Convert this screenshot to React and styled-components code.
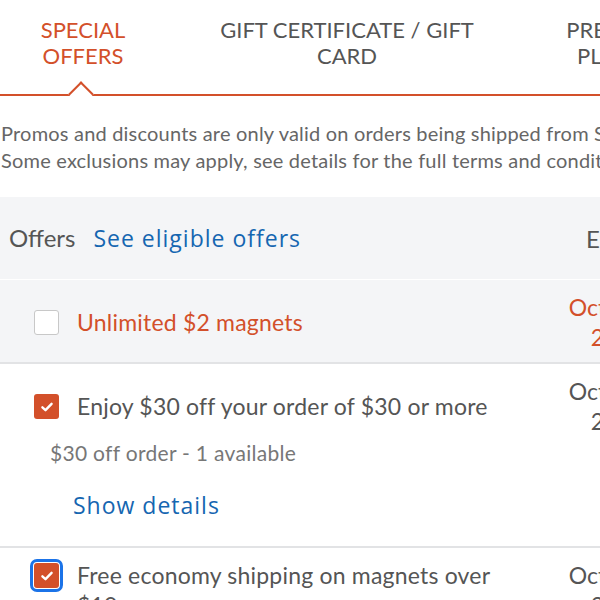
import React from "react";
import styled, { createGlobalStyle } from "styled-components";

const GlobalStyle = createGlobalStyle`
  html, body {
    margin: 0;
    padding: 0;
    background: #ffffff;
    overflow: hidden;
  }
  body {
    font-family: "Lato", "Noto Sans", sans-serif;
  }
`;

const orange = "#d3502a";
const blue = "#1566b1";

const tabs = [
  { label: "SPECIAL OFFERS", width: 166, active: true },
  { label: "GIFT CERTIFICATE / GIFT CARD", width: 362 },
  { label: "PREPAID PLANS", width: 166 },
];

const offers = [
  {
    id: 1,
    title: "Unlimited $2 magnets",
    checked: false,
    highlight: true,
    date: "Oct 31, 2023",
  },
  {
    id: 2,
    title: "Enjoy $30 off your order of $30 or more",
    checked: true,
    sub: "$30 off order - 1 available",
    details: true,
    date: "Oct 31, 2023",
  },
  {
    id: 3,
    title: "Free economy shipping on magnets over $10",
    checked: true,
    focused: true,
    date: "Oct 31, 2023",
  },
];

function App() {
  return (
    <Page>
      <GlobalStyle />
      <TabBar>
        {tabs.map((tab) => (
          <Tab key={tab.label} $width={tab.width} $active={tab.active}>
            {tab.label}
            {tab.active && <Notch />}
          </Tab>
        ))}
      </TabBar>

      <Notice>
        Promos and discounts are only valid on orders being shipped from Sticker
        Mule.
        <br />
        Some exclusions may apply, see details for the full terms and conditions.
      </Notice>

      <Table>
        <HeaderRow>
          <HeaderCell>
            Offers <LinkText>See eligible offers</LinkText>
          </HeaderCell>
          <DateHead>Expires</DateHead>
        </HeaderRow>

        {offers.map((offer) => (
          <OfferRow key={offer.id} $shaded={offer.highlight}>
            <OfferHead>
              <OfferLine>
                <Check $checked={offer.checked} $focused={offer.focused}>
                  {offer.checked && (
                    <svg width="16" height="16" viewBox="0 0 16 16">
                      <path
                        d="M3.4 8.3 L6.5 11.2 L12.6 4.8"
                        fill="none"
                        stroke="#fff"
                        strokeWidth="2.4"
                        strokeLinecap="round"
                        strokeLinejoin="round"
                      />
                    </svg>
                  )}
                </Check>
                <OfferTitle $highlight={offer.highlight}>{offer.title}</OfferTitle>
              </OfferLine>
              <DateCell $highlight={offer.highlight}>{offer.date}</DateCell>
            </OfferHead>
            {offer.sub && <OfferSub>{offer.sub}</OfferSub>}
            {offer.details && <DetailsLink>Show details</DetailsLink>}
          </OfferRow>
        ))}
      </Table>
    </Page>
  );
}

export default App;

const Page = styled.div`
  width: 760px;
  height: 600px;
  overflow: hidden;
`;

const TabBar = styled.div`
  display: flex;
  height: 96px;
  border-bottom: 2px solid ${orange};
  box-sizing: border-box;
  padding-top: 17px;
`;

const Tab = styled.div`
  position: relative;
  flex: 0 0 ${(p) => p.$width}px;
  box-sizing: border-box;
  padding: 0 ${(p) => (p.$width > 200 ? 46 : 22)}px;
  text-align: center;
  font-size: 22px;
  line-height: 26px;
  color: ${(p) => (p.$active ? orange : "#555555")};
`;

const Notch = styled.span`
  position: absolute;
  left: 50%;
  bottom: -9px;
  width: 16px;
  height: 16px;
  margin-left: -11px;
  background: #fff;
  border-left: 2px solid ${orange};
  border-top: 2px solid ${orange};
  transform: rotate(45deg);
`;

const Notice = styled.p`
  margin: 24px 0 0;
  padding: 0 0 0 1px;
  font-size: 20px;
  line-height: 27px;
  letter-spacing: 0.2px;
  color: #666666;
  white-space: nowrap;
`;

const Table = styled.div`
  margin-top: 23px;
`;

const HeaderRow = styled.div`
  display: flex;
  align-items: center;
  background: #f4f5f7;
  height: 82px;
  border-bottom: 1px solid #ffffff;
`;

const HeaderCell = styled.div`
  flex: 0 0 586px;
  box-sizing: border-box;
  padding-left: 9px;
  font-size: 24px;
  color: #555555;
  display: flex;
  align-items: baseline;
  gap: 18px;
`;

const LinkText = styled.span`
  font-family: "Open Sans", sans-serif;
  font-weight: 500;
  font-size: 23px;
  letter-spacing: 1px;
  color: ${blue};
`;

const DateHead = styled.div`
  font-size: 24px;
  color: #555555;
`;

const OfferRow = styled.div`
  background: ${(p) => (p.$shaded ? "#f4f5f7" : "#ffffff")};
  border-bottom: 2px solid #e2e3e5;
  padding: 12px 0 ${(p) => (p.$shaded ? 10 : 26)}px;
`;

const OfferHead = styled.div`
  display: flex;
  align-items: center;
  padding-left: 34px;
`;

const OfferLine = styled.div`
  flex: 0 0 507px;
  display: flex;
  align-items: flex-start;
  gap: 18px;
`;

const Check = styled.span`
  flex: 0 0 auto;
  width: 25px;
  height: 25px;
  margin-top: 3px;
  box-sizing: border-box;
  border-radius: 3px;
  display: flex;
  align-items: center;
  justify-content: center;
  background: ${(p) => (p.$checked ? orange : "#ffffff")};
  border: ${(p) => (p.$checked ? "none" : "1.5px solid #c8c8c8")};
  outline: ${(p) => (p.$focused ? "3px solid #1b73e8" : "none")};
  outline-offset: 1px;
`;

const OfferTitle = styled.div`
  width: 445px;
  font-size: 23px;
  line-height: 30px;
  letter-spacing: 0.2px;
  color: ${(p) => (p.$highlight ? orange : "#555555")};
`;

const DateCell = styled.div`
  flex: 0 0 103px;
  font-size: 23px;
  line-height: 30px;
  text-align: right;
  color: ${(p) => (p.$highlight ? orange : "#555555")};
`;

const OfferSub = styled.div`
  margin: 3px 0 0 50px;
  font-size: 21px;
  line-height: 28px;
  letter-spacing: 0.3px;
  color: #777777;
`;

const DetailsLink = styled.div`
  margin: 23px 0 0 73px;
  font-family: "Open Sans", sans-serif;
  font-weight: 500;
  font-size: 23px;
  line-height: 30px;
  letter-spacing: 1px;
  color: ${blue};
`;
